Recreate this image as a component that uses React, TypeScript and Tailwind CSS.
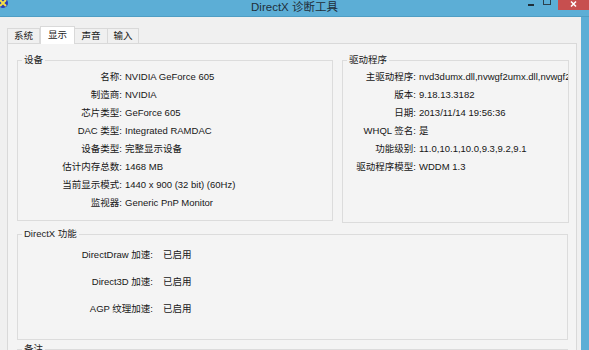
import React from 'react'

const font = { fontFamily: '"Liberation Sans", "Noto Sans CJK SC", sans-serif' }

const deviceRows = [
  ['名称:', 'NVIDIA GeForce 605'],
  ['制造商:', 'NVIDIA'],
  ['芯片类型:', 'GeForce 605'],
  ['DAC 类型:', 'Integrated RAMDAC'],
  ['设备类型:', '完整显示设备'],
  ['估计内存总数:', '1468 MB'],
  ['当前显示模式:', '1440 x 900 (32 bit) (60Hz)'],
  ['监视器:', 'Generic PnP Monitor'],
]

const driverRows = [
  ['主驱动程序:', 'nvd3dumx.dll,nvwgf2umx.dll,nvwgf2umx.dll'],
  ['版本:', '9.18.13.3182'],
  ['日期:', '2013/11/14 19:56:36'],
  ['WHQL 签名:', '是'],
  ['功能级别:', '11.0,10.1,10.0,9.3,9.2,9.1'],
  ['驱动程序模型:', 'WDDM 1.3'],
]

const dxRows = [
  ['DirectDraw 加速:', '已启用'],
  ['Direct3D 加速:', '已启用'],
  ['AGP 纹理加速:', '已启用'],
]

const GroupBox = ({ title, className, children }: { title: string; className: string; children?: React.ReactNode }) => (
  <div className={`relative border border-[#dcdcdc] ${className}`}>
    <span className='absolute -top-[8px] left-[4px] bg-[#f4f4f4] px-[2px] text-[9.5px] leading-[14px] text-[#222] whitespace-nowrap'>{title}</span>
    {children}
  </div>
)

const Rows = ({ rows, labelW, gap }: { rows: string[][]; labelW: string; gap: string }) => (
  <div className='flex flex-col overflow-hidden'>
    {rows.map(([k, v]) => (
      <div key={k} className='flex h-[18px] items-center text-[9.5px] text-[#161616] whitespace-nowrap'>
        <span className={`${labelW} text-right shrink-0`}>{k}</span>
        <span className={gap}>{v}</span>
      </div>
    ))}
  </div>
)

export default function App() {
  return (
    <div className='w-[589px] h-[350px] overflow-hidden flex flex-col bg-[#5caed6]' style={font}>
      {/* title bar */}
      <div className='relative h-[16px] shrink-0 flex items-center justify-center'>
        <svg className='absolute left-0 top-0' width='10' height='10' viewBox='0 0 10 10'>
          <circle cx='3' cy='3' r='5' fill='#2a3fb8' />
          <path d='M0 0 L6 6 M6 0 L0 6' stroke='#f4e04a' strokeWidth='2' />
        </svg>
        <span className='text-[11.5px] text-[#1f2f3a]'>DirectX 诊断工具</span>
        <div className='absolute right-[55px] top-[4px] w-[6px] h-[2px] bg-[#1f2f3a]' />
        <div className='absolute right-[38px] -top-[2px] w-[8px] h-[7px] border border-[#2b3f4c]' />
        <svg className='absolute right-0 top-0' width='31' height='10' viewBox='0 0 31 10'>
          <rect width='31' height='10' fill='#c74f4f' />
          <path d='M13 1.5 L18 6.5 M18 1.5 L13 6.5' stroke='#ffffff' strokeWidth='1.5' />
        </svg>
      </div>
      <div className='flex flex-1 min-h-0 border-t border-[#4f9ec4]'>
        <div className='flex-1 bg-[#f0f0f0] pl-[7px] pr-[4px] pt-[9px] flex flex-col'>
          {/* tabs */}
          <div className='flex items-end h-[18px] text-[9.5px] text-[#1a1a1a]'>
            <div className='w-[33px] h-[15px] border border-b-0 border-[#d9d9d9] bg-[#f0f0f0] flex items-center justify-center'>系统</div>
            <div className='w-[35px] h-[18px] border border-b-0 border-[#d9d9d9] bg-white flex items-center justify-center -mb-[1px] relative z-10'>显示</div>
            <div className='w-[33px] h-[15px] border border-b-0 border-l-0 border-[#d9d9d9] bg-[#f0f0f0] flex items-center justify-center'>声音</div>
            <div className='w-[31px] h-[15px] border border-b-0 border-l-0 border-[#d9d9d9] bg-[#f0f0f0] flex items-center justify-center'>输入</div>
          </div>
          {/* panel */}
          <div className='flex-1 border border-b-0 border-[#d9d9d9] bg-[#f4f4f4] pl-[9px] pt-[16px] flex flex-col'>
            <div className='flex gap-[9px]'>
              <GroupBox title='设备' className='w-[316px] h-[161px] pt-[7px]'>
                <Rows rows={deviceRows} labelW='w-[104px]' gap='pl-[3px]' />
              </GroupBox>
              <GroupBox title='驱动程序' className='w-[227px] h-[163px] pt-[7px]'>
                <Rows rows={driverRows} labelW='w-[73px]' gap='pl-[3px]' />
              </GroupBox>
            </div>
            <GroupBox title='DirectX 功能' className='mt-[11px] w-[551px] h-[106px] pt-[11px]'>
              <div className='flex flex-col gap-[9px]'>
                {dxRows.map(([k, v]) => (
                  <div key={k} className='flex h-[18px] items-center text-[9.5px] text-[#161616] whitespace-nowrap'>
                    <span className='w-[135px] text-right shrink-0'>{k}</span>
                    <span className='pl-[10px]'>{v}</span>
                  </div>
                ))}
              </div>
            </GroupBox>
            <GroupBox title='备注' className='mt-[9px] w-[551px] h-[40px]' />
          </div>
        </div>
        <div className='w-[8px] shrink-0 bg-[#5caed6]' />
      </div>
    </div>
  )
}
